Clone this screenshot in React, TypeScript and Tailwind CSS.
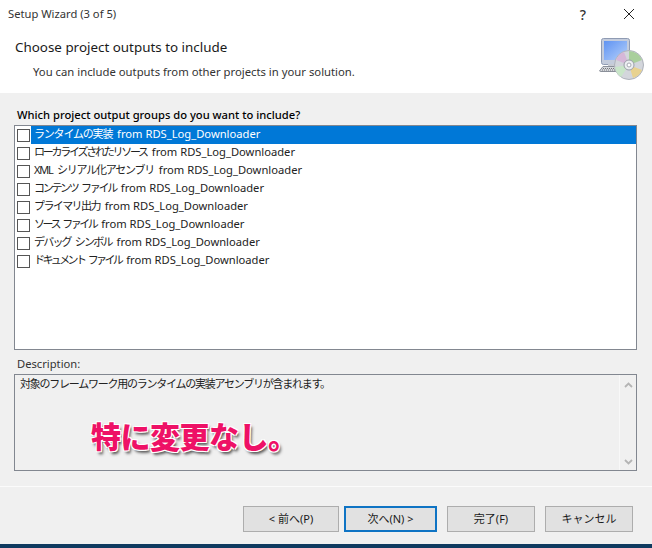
import React from "react";

const FONT = "[font-family:'Noto_Sans','Open_Sans','Noto_Sans_CJK_JP',sans-serif]";

const rows = [
  { jp: "ランタイムの実装", cls: "tracking-[-1.2px]" },
  { jp: "ローカライズされたリソース", cls: "tracking-[-2.25px]" },
  { jp: "XML シリアル化アセンブリ", cls: "tracking-[-1.25px] [word-spacing:3px]" },
  { jp: "コンテンツ ファイル", cls: "tracking-[-2.3px] [word-spacing:3px]" },
  { jp: "プライマリ出力", cls: "tracking-[-1.6px]" },
  { jp: "ソース ファイル", cls: "tracking-[-2.5px] [word-spacing:3px]" },
  { jp: "デバッグ シンボル", cls: "tracking-[-1.8px] [word-spacing:3px]" },
  { jp: "ドキュメント ファイル", cls: "tracking-[-2.6px] [word-spacing:3px]" },
];

const SetupIcon = () => (
  <svg width="46" height="46" viewBox="0 0 46 46">
    <defs>
      <linearGradient id="screen" x1="0" y1="0" x2="1" y2="1">
        <stop offset="0" stopColor="#5f93f2" />
        <stop offset="1" stopColor="#b5d0fb" />
      </linearGradient>
    </defs>
    <rect x="2.500" y="4.500" width="28" height="26" rx="2" fill="#c4ccdc" stroke="#8f9bb3" />
    <rect x="5" y="7" width="23" height="19" fill="url(#screen)" />
    <rect x="9" y="30" width="12" height="3" fill="#c7cbd3" />
    <path d="M0.500 37 L4 32.500 H20 V37.500 H2 Z" fill="#d5d8de" stroke="#8a8f99" />
    <path d="M4 34.500 H18 M3 36 H18" stroke="#777" strokeDasharray="1 1" />
    <circle cx="30" cy="31" r="14.500" fill="#d3d6dc" stroke="#aeb2bb" />
    <path d="M30 31 L30 17 A14 14 0 0 1 43 26 Z" fill="#a9cf9c" />
    <path d="M30 31 L43 36 A14 14 0 0 1 34 44 Z" fill="#e8d28f" />
    <path d="M30 31 L22 43 A14 14 0 0 1 16 33 Z" fill="#c9e6c9" />
    <path d="M30 31 L17 26 A14 14 0 0 1 25 18 Z" fill="#d6b7d8" />
    <circle cx="30" cy="31" r="5" fill="#eceef1" stroke="#9a9ea8" />
    <circle cx="30" cy="31" r="2" fill="#ffffff" stroke="#a6a9b1" />
  </svg>
);

const Chevron = ({ up }: { up?: boolean }) => (
  <svg width="9" height="6" viewBox="0 0 9 6">
    <path d={up ? "M1 5 L4.500 1.500 L8 5" : "M1 1 L4.500 4.500 L8 1"} fill="none" stroke="#b4b4b4" strokeWidth="1.800" />
  </svg>
);

const WizardButton = ({ label, width, active }: { label: string; width: string; active?: boolean }) => (
  <button
    className={`h-[26px] ${width} flex items-center justify-center bg-[#e1e1e1] text-[11px] text-[#1a1a1a] ${
      active ? "border-2 border-[#0f74c4]" : "border border-[#adadad]"
    }`}
  >
    {label}
  </button>
);

export default function App() {
  return (
    <div className={`relative w-[652px] h-[548px] overflow-hidden flex flex-col bg-[#f0f0f0] text-[#111] ${FONT}`}>
      <div className="h-[93px] shrink-0 bg-white flex flex-col">
        <div className="h-[28px] flex items-center pl-2 pr-[9px] text-[11.2px] text-[#333]">
          <span className="flex-1">Setup Wizard (3 of 5)</span>
          <span className="text-[14px] mr-[37px] font-medium">?</span>
          <svg width="12" height="12" viewBox="0 0 12 12" className="mr-[8px]">
            <path d="M1 1 L11 11 M11 1 L1 11" stroke="#222" strokeWidth="1" fill="none" />
          </svg>
        </div>
        <div className="flex justify-between pl-[15px] pr-[7px]">
          <div>
            <div className="mt-[9px] text-[13.4px] leading-5 text-[#1a1a1a]">Choose project outputs to include</div>
            <div className="mt-[7px] ml-[18px] text-[11.3px] leading-4 text-[#333]">
              You can include outputs from other projects in your solution.
            </div>
          </div>
          <div className="mt-[6px]">
            <SetupIcon />
          </div>
        </div>
      </div>

      <div className="pt-[14px] px-[14px] flex flex-col flex-1">
        <div className="h-[18px] pl-[3px] text-[11.2px] leading-[16px] font-medium text-black">
          Which project output groups do you want to include?
        </div>
        <div className="w-[623px] h-[225px] bg-white border border-[#828790] pl-[2px] pr-0 flex flex-col">
          {rows.map((row, i) => (
            <div key={row.jp} className="h-[18px] flex items-center shrink-0">
              <span className="w-[13px] h-[13px] border border-[#555] bg-white shrink-0" />
              <span
                className={`ml-px pl-[3px] flex-1 h-[18px] text-[11.2px] leading-[16px] whitespace-nowrap ${
                  i === 0 ? "bg-[#0078d7] text-white" : "text-[#222]"
                }`}
              >
                <span className={`text-[11px] ${row.cls}`}>{row.jp}</span>
                <span className="ml-[2px]"> from RDS_Log_Downloader</span>
              </span>
            </div>
          ))}
        </div>
        <div className="mt-[6px] h-[18px] pl-[3px] text-[11.2px] leading-[16px] text-[#333]">Description:</div>
        <div className="w-[623px] h-[97px] border border-[#828790] bg-[#f0f0f0] flex">
          <div className="flex-1 pl-[5px] pt-[1px] text-[11px] tracking-[-1.25px] leading-[16px] text-[#222]">
            対象のフレームワーク用のランタイムの実装アセンブリが含まれます。
          </div>
          <div className="w-[17px] border-l border-[#f8f8f8] flex flex-col items-center justify-between pt-[7px] pb-[5px]">
            <Chevron up />
            <Chevron />
          </div>
        </div>
      </div>

      <div className="h-[58px] shrink-0 border-t border-[#fbfbfb] pt-[19px] pl-[243px] flex">
        <WizardButton label="< 前へ(P)" width="w-[96px]" />
        <div className="w-[5px]" />
        <WizardButton label="次へ(N) >" width="w-[93px]" active />
        <div className="w-[10px]" />
        <WizardButton label="完了(F)" width="w-[88px]" />
        <div className="w-[10px]" />
        <WizardButton label="キャンセル" width="w-[88px]" />
      </div>
      <div className="h-[4px] shrink-0 bg-[#0f3a5f]" />

      <div className="absolute left-[91px] top-[413px] text-[30px] tracking-[-0.5px] leading-[48px] font-black text-[#ee1166] [text-shadow:1px_1px_0_#fff,-1px_-1px_0_#fff,1px_-1px_0_#fff,-1px_1px_0_#fff,2px_3px_3px_#555] whitespace-nowrap">
        特に変更なし。
      </div>
    </div>
  );
}
